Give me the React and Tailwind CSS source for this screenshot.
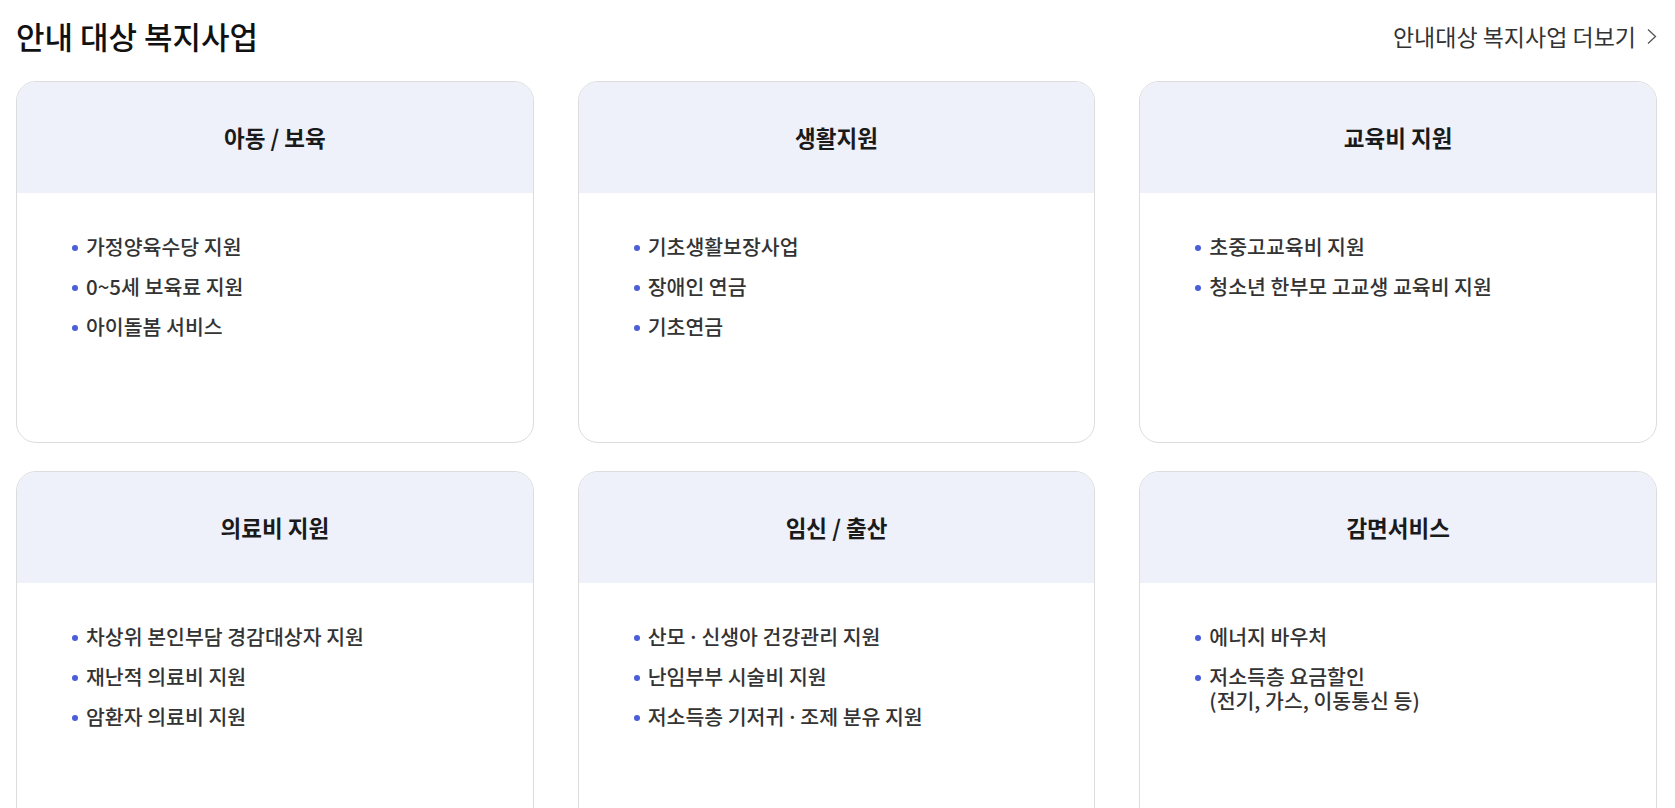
import React from 'react';

const programs = [
  { title: '아동 / 보육', items: ['가정양육수당 지원', '0~5세 보육료 지원', '아이돌봄 서비스'] },
  { title: '생활지원', items: ['기초생활보장사업', '장애인 연금', '기초연금'] },
  { title: '교육비 지원', items: ['초중고교육비 지원', '청소년 한부모 고교생 교육비 지원'] },
  { title: '의료비 지원', items: ['차상위 본인부담 경감대상자 지원', '재난적 의료비 지원', '암환자 의료비 지원'] },
  { title: '임신 / 출산', items: ['산모 · 신생아 건강관리 지원', '난임부부 시술비 지원', '저소득층 기저귀 · 조제 분유 지원'] },
  { title: '감면서비스', items: ['에너지 바우처', ['저소득층 요금할인', '(전기, 가스, 이동통신 등)']] },
];

// 가운데점(·)은 CJK 폰트에서 전각이라 폭을 조금 줄여준다
function withDots(text) {
  const parts = text.split('·');
  return parts.map((part, i) => (
    <React.Fragment key={i}>
      {part}
      {i < parts.length - 1 && <span className="mx-[-2.5px]">·</span>}
    </React.Fragment>
  ));
}

function ProgramCard({ title, items }) {
  return (
    <div className="h-[362px] rounded-[20px] border border-[#dcdcdc] overflow-hidden bg-white">
      <div className="h-[111px] bg-[#eef1fa] flex items-center justify-center">
        <h3 className="text-[22.5px] font-bold text-[#1a1a1a]">{title}</h3>
      </div>
      <ul className="pt-[41px] pl-[55px] flex flex-col gap-[16px]">
        {items.map((item, i) => (
          <li key={i} className="flex items-start gap-[8px] text-[20.5px] leading-[24px] font-medium text-[#333333]">
            <span className="mt-[11px] w-[6px] h-[6px] rounded-full bg-[#4a5ed8] shrink-0" />
            {Array.isArray(item) ? (
              <span>
                {item[0]}
                <br />
                {item[1]}
              </span>
            ) : (
              <span>{withDots(item)}</span>
            )}
          </li>
        ))}
      </ul>
    </div>
  );
}

export default function App() {
  return (
    <div className="w-[1675px] bg-white pl-4 pr-[18px] font-['Noto_Sans_CJK_KR','Noto_Sans',sans-serif]">
      <div className="h-[72px] flex items-center justify-between">
        <h2 className="text-[31px] font-medium text-[#111111]">안내 대상 복지사업</h2>
        <a href="#" className="flex items-center gap-[10px] text-[23px] text-[#333333]">
          안내대상 복지사업 더보기
          <svg width="11" height="17" viewBox="0 0 11 17" fill="none">
            <polyline points="2,1.5 9.5,8.5 2,15.5" stroke="#555555" strokeWidth="1.3" />
          </svg>
        </a>
      </div>
      <div className="mt-[9px] grid grid-cols-3 gap-x-[44px] gap-y-[28px]">
        {programs.map((p) => (
          <ProgramCard key={p.title} title={p.title} items={p.items} />
        ))}
      </div>
    </div>
  );
}
